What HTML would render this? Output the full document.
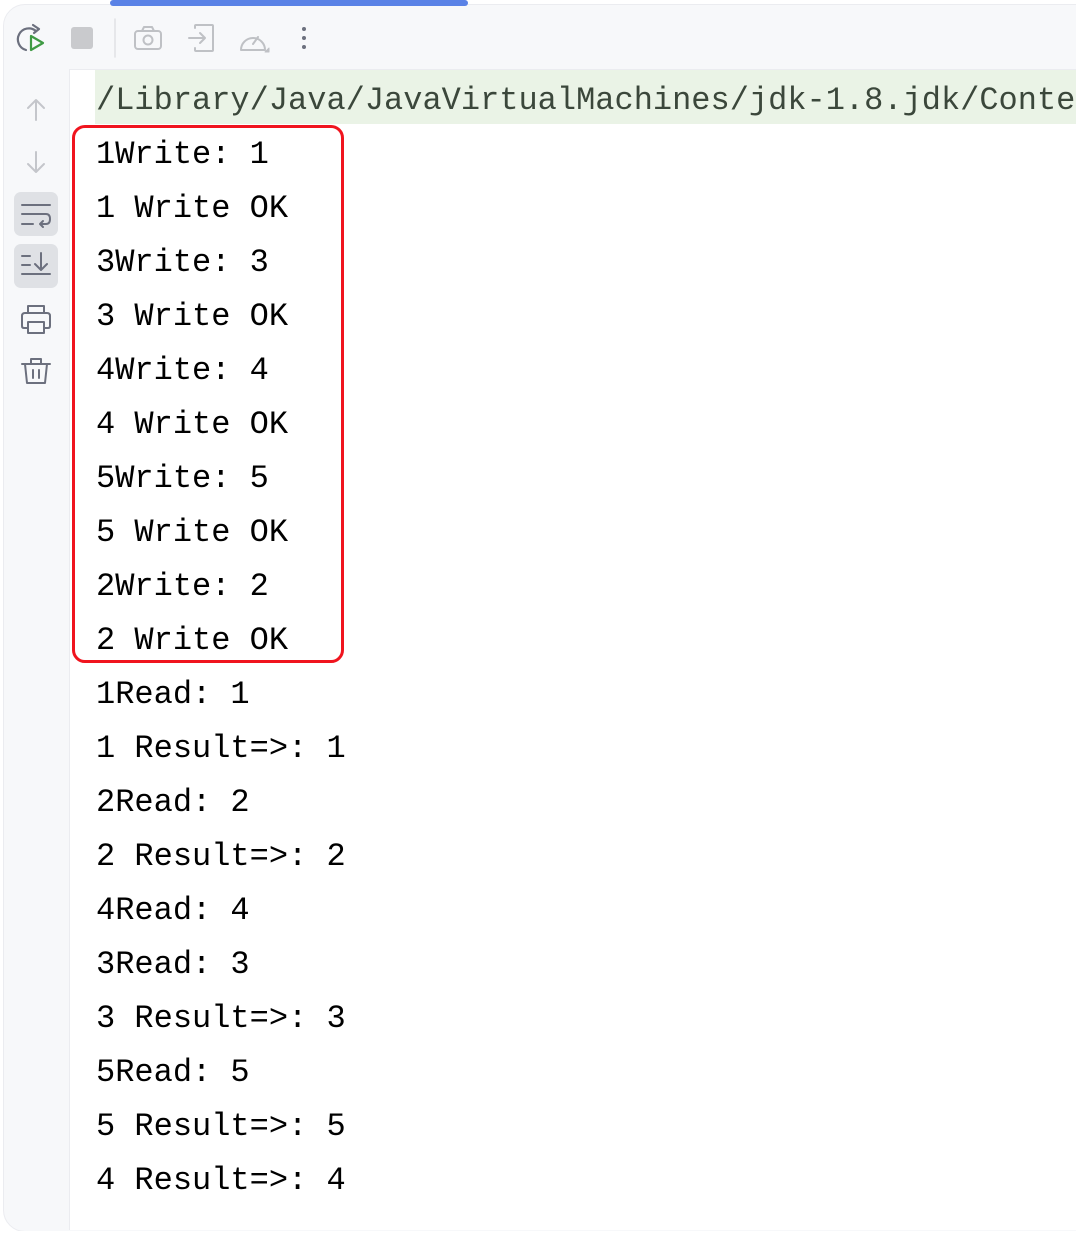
<!DOCTYPE html>
<html><head><style>
body{margin:0;width:1076px;height:1242px;background:#fff;overflow:hidden;position:relative;font-family:"Liberation Mono",monospace}
.panel{position:absolute;left:3px;top:4px;width:1090px;height:1226px;background:#f7f8fa;border-radius:22px 0 0 22px;border:1px solid #ebecf0}
.blue{position:absolute;left:110px;top:0;width:358px;height:6px;background:#5a82e6;border-radius:3px}
.content{position:absolute;left:69px;top:69px;width:1010px;height:1160px;background:#fff;border-left:1px solid #ebecf0;border-top:1px solid #ebecf0}
.lines{position:absolute;left:96px;top:74px;font-size:32px;line-height:54px;color:#000;white-space:pre}
.first{position:absolute;left:95px;top:70px;width:990px;height:54px;background:#eaf3e6}
.box{position:absolute;left:72px;top:125px;width:266px;height:532px;border:3px solid #f0141e;border-radius:13px}
.bottom{position:absolute;left:0;top:1231px;width:1076px;height:11px;background:#fff}
.ic{position:absolute}
.sel{position:absolute;left:14px;width:44px;height:44px;background:#dfe1e5;border-radius:7px}
</style></head><body>
<div class="panel"></div>
<div class="blue"></div>
<div class="content"></div>
<div class="first"></div>
<svg class="ic" style="left:0;top:0" width="330" height="70" fill="none" stroke-linecap="round" stroke-linejoin="round">
 <path d="M36 31 A11 11 0 1 0 26 50" stroke="#6c707e" stroke-width="2.2"/>
 <path d="M33 25 L39 29 L34 33" stroke="#6c707e" stroke-width="2.2"/>
 <path d="M31 36 L43 43 L31 50 Z" stroke="#3f9a44" stroke-width="2.2"/>
 <rect x="71" y="27" width="22" height="22" rx="3" fill="#c9cacd"/>
 <line x1="115" y1="19" x2="115" y2="57" stroke="#e0e1e4" stroke-width="1.5"/>
 <rect x="135" y="31" width="26" height="18" rx="3" stroke="#bfc1c5" stroke-width="2"/>
 <path d="M142 31 L144 27 L152 27 L154 31" stroke="#bfc1c5" stroke-width="2"/>
 <circle cx="148" cy="40" r="4.5" stroke="#bfc1c5" stroke-width="2"/>
 <path d="M195 28 L195 26 Q195 25 196 25 L212 25 Q213 25 213 26 L213 50 Q213 51 212 51 L196 51 Q195 51 195 50 L195 48 M189 38 L205 38 M200 33 L205 38 L200 43" stroke="#bfc1c5" stroke-width="2"/>
 <path d="M241 50 A12 12 0 1 1 265 50 Z" stroke="#bfc1c5" stroke-width="2"/>
 <path d="M253 44 L258 37" stroke="#bfc1c5" stroke-width="2"/>
 <path d="M265 52 L269 48 L269 52 Z" fill="#bfc1c5" stroke="#bfc1c5"/>
 <circle cx="304" cy="29" r="2" fill="#6c707e"/><circle cx="304" cy="38" r="2" fill="#6c707e"/><circle cx="304" cy="47" r="2" fill="#6c707e"/>
</svg>
<div class="sel" style="top:192px"></div>
<div class="sel" style="top:244px"></div>
<svg class="ic" style="left:0;top:80px" width="70" height="320" fill="none" stroke-linecap="round" stroke-linejoin="round" stroke-width="2">
 <path d="M36 20 L36 40 M28 28 L36 20 L44 28" stroke="#c4c6cb"/>
 <path d="M36 72 L36 92 M28 84 L36 92 L44 84" stroke="#c4c6cb"/>
 <path d="M22 125 L50 125 M22 134 L46 134 Q50 134 50 139 Q50 144 46 144 L40 144 M43 141 L40 144 L43 147 M22 144 L33 144" stroke="#6c707e"/>
 <path d="M22 176 L30 176 M22 185 L30 185 M22 194 L50 194 M41 173 L41 190 M35 184 L41 190 L47 184" stroke="#6c707e"/>
 <path d="M28 233 L28 226 L44 226 L44 233 M28 248 L24 248 Q22 248 22 246 L22 236 Q22 233 25 233 L47 233 Q50 233 50 236 L50 246 Q50 248 48 248 L44 248 M28 242 L44 242 L44 253 L28 253 Z" stroke="#6c707e"/>
 <path d="M22 284 L50 284 M31 284 L31 279 L41 279 L41 284 M25 284 L27 303 L45 303 L47 284 M33 290 L33 298 M39 290 L39 298" stroke="#6c707e"/>
</svg>
<div class="lines"><span style="color:#3b473b">/Library/Java/JavaVirtualMachines/jdk-1.8.jdk/Conte</span>
1Write: 1
1 Write OK
3Write: 3
3 Write OK
4Write: 4
4 Write OK
5Write: 5
5 Write OK
2Write: 2
2 Write OK
1Read: 1
1 Result=>: 1
2Read: 2
2 Result=>: 2
4Read: 4
3Read: 3
3 Result=>: 3
5Read: 5
5 Result=>: 5
4 Result=>: 4</div>
<div class="box"></div>
<div class="bottom"></div>
</body></html>
